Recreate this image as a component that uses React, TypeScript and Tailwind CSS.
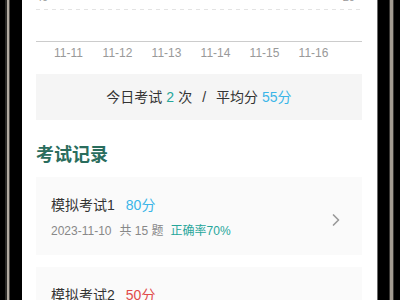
import { ChevronRight } from "lucide-react";

const days = ["11-11", "11-12", "11-13", "11-14", "11-15", "11-16"];

interface Exam {
  name: string;
  score: number;
  date: string;
  total: number;
  rate: number;
}

const exams: Exam[] = [
  { name: "模拟考试1", score: 80, date: "2023-11-10", total: 15, rate: 70 },
  { name: "模拟考试2", score: 50, date: "2023-11-10", total: 15, rate: 40 },
];

function ExamCard({ exam }: { exam: Exam }) {
  const pass = exam.score >= 60;
  return (
    <div className="bg-[#fafafa] pl-[15px] pr-[16px] pt-[18px] pb-[15px] flex items-center">
      <div className="flex-1">
        <div className="flex items-center text-[14px] leading-[20px]">
          <span className="text-[#333]">{exam.name}</span>
          <span className={pass ? "ml-[11px] text-[#3bb5e8]" : "ml-[11px] text-[#e04a4a]"}>
            {exam.score}分
          </span>
        </div>
        <div className="mt-[7px] flex items-center text-[12px] leading-[18px] text-[#888]">
          <span>{exam.date}</span>
          <span className="ml-[8px]">共 {exam.total} 题</span>
          <span className="ml-[7px] text-[#26a69a]">正确率{exam.rate}%</span>
        </div>
      </div>
      <ChevronRight className="w-5 h-5 text-[#999] mt-[4px]" strokeWidth={2} />
    </div>
  );
}

export default function App() {
  return (
    <div className="flex h-[300px] w-[400px] bg-black overflow-hidden font-['Liberation_Sans','Noto_Sans_CJK_SC',sans-serif]">
      {/* left bezel */}
      <div className="w-[22px] flex shrink-0">
        <div className="w-[5px]" />
        <div className="w-[2px] bg-[#2a2926]" />
        <div className="w-[2px] bg-[#b3aca2]" />
        <div className="w-[1px] bg-[#4a4743]" />
      </div>

      {/* screen */}
      <div className="flex-1 bg-white overflow-hidden pl-[14px] pr-[15px]">
        {/* chart tail */}
        <div className="mt-[-9px]">
          <div className="flex justify-between text-[11px] leading-[12px] text-[#999] pr-[7px]">
            <span>40</span>
            <span>20</span>
          </div>
          <svg className="block mt-[6px] w-full h-[1px]" preserveAspectRatio="none">
            <line x1="0" y1="0.5" x2="100%" y2="0.5" stroke="#e3e3e3" strokeWidth="1" strokeDasharray="4 4" />
          </svg>
          <div className="h-[31px]" />
          <div className="border-t border-[#cccccc]" />
          <div className="grid grid-cols-[repeat(6,49px)] pl-[8px] mt-[3px] text-[12px] leading-[16px] text-[#999]">
            {days.map((d) => (
              <span key={d} className="text-center">{d}</span>
            ))}
          </div>
        </div>

        {/* today stats */}
        <div className="mt-[13px] h-[46px] bg-[#f5f5f5] flex items-center justify-center text-[14px] text-[#333]">
          <span>今日考试</span>
          <span className="mx-[4px] text-[#26a69a]">2</span>
          <span>次</span>
          <span className="mx-[10px]">/</span>
          <span>平均分</span>
          <span className="ml-[4px] text-[#3bb5e8]">55分</span>
        </div>

        {/* records */}
        <h2 className="mt-[22px] text-[18px] leading-[26px] font-bold text-[#2a6d5d]">考试记录</h2>
        <div className="mt-[9px] flex flex-col gap-[12px]">
          {exams.map((e) => (
            <ExamCard key={e.name} exam={e} />
          ))}
        </div>
      </div>

      {/* right bezel */}
      <div className="w-[23px] flex shrink-0">
        <div className="w-[1px] bg-[#6b6b6b]" />
        <div className="w-[11px]" />
        <div className="w-[1px] bg-[#3a3835]" />
        <div className="w-[3px] bg-[#a39c92]" />
        <div className="w-[1px] bg-[#3a3835]" />
      </div>
    </div>
  );
}
